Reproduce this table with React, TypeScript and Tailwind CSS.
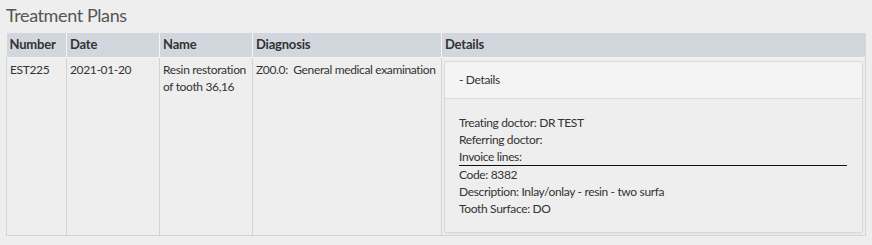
import React from "react";

type Plan = {
  number: string;
  date: string;
  name: string;
  diagnosis: string;
  doctor: string;
  referring: string;
  lines: { code: string; description: string; surface: string }[];
};

const plans: Plan[] = [
  {
    number: "EST225",
    date: "2021-01-20",
    name: "Resin restoration of tooth 36,16",
    diagnosis: "Z00.0:\u00a0 General medical examination",
    doctor: "DR TEST",
    referring: "",
    lines: [{ code: "8382", description: "Inlay/onlay - resin - two surfa", surface: "DO" }],
  },
];

const font = { fontFamily: "Lato, 'Open Sans', sans-serif" };

export default function App() {
  return (
    <div className="min-h-screen w-[872px] bg-[#eeeeee] px-[6px] pt-[2px] text-[#333]" style={font}>
      <h1 className="text-[18px] leading-[26px] tracking-[-0.4px] text-[#555] mb-[5px]">Treatment Plans</h1>
      <table className="w-[860px] border-collapse table-fixed text-[12px] leading-[17px] tracking-[-0.35px]">
        <colgroup>
          <col className="w-[60px]" />
          <col className="w-[93px]" />
          <col className="w-[93px]" />
          <col className="w-[189px]" />
          <col />
        </colgroup>
        <thead>
          <tr className="bg-[#d2d6dd] text-[13px] font-bold tracking-[-0.2px] text-[#333] h-[24px]">
            {["Number", "Date", "Name", "Diagnosis", "Details"].map((h, i) => (
              <th
                key={h}
                className={`text-left px-[3px] align-middle ${i > 0 ? "border-l border-[#f4f4f4]" : ""}`}
              >
                {h}
              </th>
            ))}
          </tr>
        </thead>
        <tbody>
          {plans.map(p => (
            <tr key={p.number} className="border border-[#d0d4db] border-t-[#f4f4f4]">
              <td className="align-top px-[3px] pt-[3px] border-r border-[#d0d4db]">{p.number}</td>
              <td className="align-top px-[3px] pt-[3px] border-r border-[#d0d4db]">{p.date}</td>
              <td className="align-top px-[3px] pt-[3px] border-r border-[#d0d4db]">{p.name}</td>
              <td className="align-top px-[3px] pt-[3px] border-r border-[#d0d4db] whitespace-nowrap">{p.diagnosis}</td>
              <td className="align-top p-[2px] pt-[3px] pb-[2px]">
                <div className="rounded-[3px] border border-[#d9d9d9] shadow-[0_1px_2px_rgba(0,0,0,0.06)] bg-[#eeeeee]">
                  <div className="h-[37px] bg-[#f4f4f4] border-b border-[#dadada] flex items-center px-[14px] rounded-t-[3px]">
                    - Details
                  </div>
                  <div className="px-[14px] pt-[15px] pb-[15px]">
                    <div>Treating doctor: {p.doctor}</div>
                    <div>Referring doctor: {p.referring}</div>
                    <div className="border-b border-[#111] w-[388px]">Invoice lines:</div>
                    {p.lines.map(l => (
                      <div key={l.code}>
                        <div>Code: {l.code}</div>
                        <div>Description: {l.description}</div>
                        <div>Tooth Surface: {l.surface}</div>
                      </div>
                    ))}
                  </div>
                </div>
              </td>
            </tr>
          ))}
        </tbody>
      </table>
    </div>
  );
}
